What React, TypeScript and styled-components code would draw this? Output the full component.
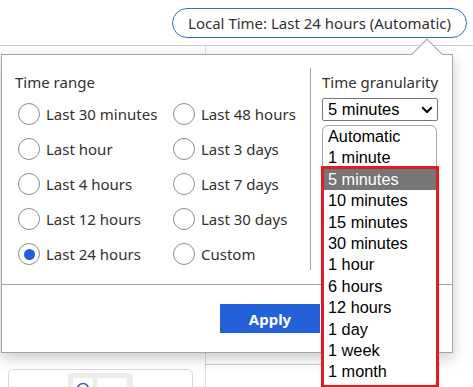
import React from "react";
import styled, { createGlobalStyle } from "styled-components";

const Global = createGlobalStyle`
  html, body { margin: 0; padding: 0; background: #fff; }
  * { box-sizing: border-box; }
`;

const UI = `"Noto Sans", "Open Sans", sans-serif`;
const ARIAL = `"Liberation Sans", Arial, sans-serif`;

const Page = styled.div`
  position: relative;
  width: 473px;
  height: 387px;
  overflow: hidden;
  font-family: ${UI};
  color: #323130;
`;

const Header = styled.header`
  height: 46px;
  border-bottom: 1px solid #cfcfcf;
  display: flex;
  justify-content: flex-end;
  align-items: flex-start;
  padding: 8px 6px 0 0;
`;

const Pill = styled.button`
  height: 30px;
  border: 1px solid #2b6fd0;
  border-radius: 16px;
  background: #fff;
  padding: 0 15px 0 15px;
  font-family: ${UI};
  font-size: 15px;
  color: #323130;
  white-space: nowrap;
`;

const Body = styled.div`
  display: flex;
  height: 341px;
`;

const LeftPane = styled.div`
  width: 206px;
  border-right: 1px solid #dcdcdc;
  padding: 323px 0 0 8px;
`;

const Card = styled.div`
  width: 185px;
  height: 40px;
  border: 1px solid #dadada;
  border-radius: 5px;
  padding: 3px 0 0 59px;
`;

const ToolGroup = styled.div`
  width: 65px;
  height: 30px;
  background: #ececec;
  border-radius: 3px;
  display: flex;
  gap: 4px;
  padding: 5px 0 0 5px;
`;

const ToolBtn = styled.div<{ $w: number }>`
  width: ${(p) => p.$w}px;
  height: 24px;
  background: #fff;
  border-radius: 2px;
  display: flex;
  justify-content: center;
  padding-top: 4px;
`;

const RightPane = styled.div`
  flex: 1;
  padding-top: 318px;
`;

const Rule = styled.div`
  width: 234px;
  border-top: 1px solid #cfcfcf;
`;

const Panel = styled.div`
  position: absolute;
  left: 1px;
  top: 54px;
  width: 452px;
  height: 299px;
  background: #fff;
  border: 1px solid #a6a6a6;
  box-shadow: 0 5px 14px rgba(0, 0, 0, 0.22);
  display: flex;
  flex-direction: column;
`;

const Notch = styled.div`
  position: absolute;
  left: 414px;
  top: -12px;
  width: 22px;
  height: 22px;
  background: #fff;
  border-top: 1px solid #a6a6a6;
  border-left: 1px solid #a6a6a6;
  transform: rotate(45deg);
`;

const Top = styled.div`
  position: relative;
  display: flex;
  height: 229px;
`;

const RangeCol = styled.div`
  width: 308px;
  padding: 17px 0 0 13px;
`;

const SectionLabel = styled.div`
  font-size: 15px;
  line-height: 20px;
  color: #323130;
  white-space: nowrap;
`;

const RadioGrid = styled.div`
  margin: 4.5px 0 0 3px;
  display: grid;
  grid-template-columns: 155px 140px;
  grid-template-rows: repeat(5, 35px);
  grid-auto-flow: column;
`;

const RadioRow = styled.label`
  display: flex;
  align-items: center;
  gap: 6px;
  font-size: 15px;
  white-space: nowrap;
`;

const Circle = styled.span<{ $on?: boolean }>`
  width: 22px;
  height: 22px;
  border-radius: 50%;
  border: 1.5px solid #8f8d8b;
  display: flex;
  align-items: center;
  justify-content: center;
  flex: none;
  &::after {
    content: "";
    display: ${(p) => (p.$on ? "block" : "none")};
    width: 11px;
    height: 11px;
    border-radius: 50%;
    background: #1f5fdc;
  }
`;

const Divider = styled.div`
  width: 1px;
  background: #a6a6a6;
  margin: 13px 0 14px;
`;

const GranCol = styled.div`
  padding: 17px 0 0 11px;
`;

const SelectWrap = styled.div`
  position: relative;
  margin-top: 6px;
  width: 116px;
`;

const SelectBox = styled.div`
  height: 23px;
  border: 1px solid #767676;
  border-radius: 2px;
  display: flex;
  align-items: center;
  justify-content: space-between;
  padding: 0 4px 0 5px;
  font-family: ${ARIAL};
  font-size: 16.5px;
  color: #000;
`;

const ListBox = styled.div`
  position: absolute;
  top: 27px;
  left: 0;
  width: 115px;
  height: 262px;
  background: #fff;
  border: 1px solid #a8a8a8;
  border-radius: 6px;
  overflow: hidden;
  z-index: 2;
`;

const Option = styled.div<{ $sel?: boolean }>`
  height: 21.4px;
  line-height: 21.4px;
  padding-left: 5px;
  font-family: ${ARIAL};
  font-size: 16.3px;
  white-space: nowrap;
  color: ${(p) => (p.$sel ? "#fff" : "#000")};
  background: ${(p) => (p.$sel ? "#767676" : "transparent")};
`;

const RedFrame = styled.div`
  position: absolute;
  left: -1px;
  top: 68px;
  width: 118px;
  height: 222px;
  border: 3px solid #e31b23;
  z-index: 3;
  pointer-events: none;
`;

const Footer = styled.div`
  flex: 1;
  border-top: 1px solid #a6a6a6;
  padding: 19px 0 0 218px;
`;

const ApplyButton = styled.button`
  width: 100px;
  height: 29px;
  border: none;
  background: #2460d8;
  color: #fff;
  font-family: ${UI};
  font-weight: 700;
  font-size: 15px;
  padding: 0;
`;

const ranges = [
  "Last 30 minutes",
  "Last hour",
  "Last 4 hours",
  "Last 12 hours",
  "Last 24 hours",
  "Last 48 hours",
  "Last 3 days",
  "Last 7 days",
  "Last 30 days",
  "Custom",
];

const grains = [
  "Automatic",
  "1 minute",
  "5 minutes",
  "10 minutes",
  "15 minutes",
  "30 minutes",
  "1 hour",
  "6 hours",
  "12 hours",
  "1 day",
  "1 week",
  "1 month",
];

export default function App() {
  return (
    <>
      <Global />
      <Page>
        <Header>
          <Pill>Local Time: Last 24 hours (Automatic)</Pill>
        </Header>
        <Body>
          <LeftPane>
            <Card>
              <ToolGroup>
                <ToolBtn $w={20}>
                  <svg width="14" height="14" viewBox="0 0 14 14">
                    <circle cx="7" cy="7" r="5.5" fill="none" stroke="#2a62c9" strokeWidth="1.5" />
                  </svg>
                </ToolBtn>
                <ToolBtn $w={30} />
              </ToolGroup>
            </Card>
          </LeftPane>
          <RightPane>
            <Rule />
          </RightPane>
        </Body>

        <Panel>
          <Notch />
          <Top>
            <RangeCol>
              <SectionLabel>Time range</SectionLabel>
              <RadioGrid>
                {ranges.map((r) => (
                  <RadioRow key={r}>
                    <Circle $on={r === "Last 24 hours"} />
                    {r}
                  </RadioRow>
                ))}
              </RadioGrid>
            </RangeCol>
            <Divider />
            <GranCol>
              <SectionLabel>Time granularity</SectionLabel>
              <SelectWrap>
                <SelectBox>
                  5 minutes
                  <svg width="12" height="8" viewBox="0 0 12 8">
                    <path d="M1.2 1.2 L6 6 L10.8 1.2" fill="none" stroke="#000" strokeWidth="2" />
                  </svg>
                </SelectBox>
                <ListBox>
                  {grains.map((g) => (
                    <Option key={g} $sel={g === "5 minutes"}>
                      {g}
                    </Option>
                  ))}
                </ListBox>
                <RedFrame />
              </SelectWrap>
            </GranCol>
          </Top>
          <Footer>
            <ApplyButton>Apply</ApplyButton>
          </Footer>
        </Panel>
      </Page>
    </>
  );
}
